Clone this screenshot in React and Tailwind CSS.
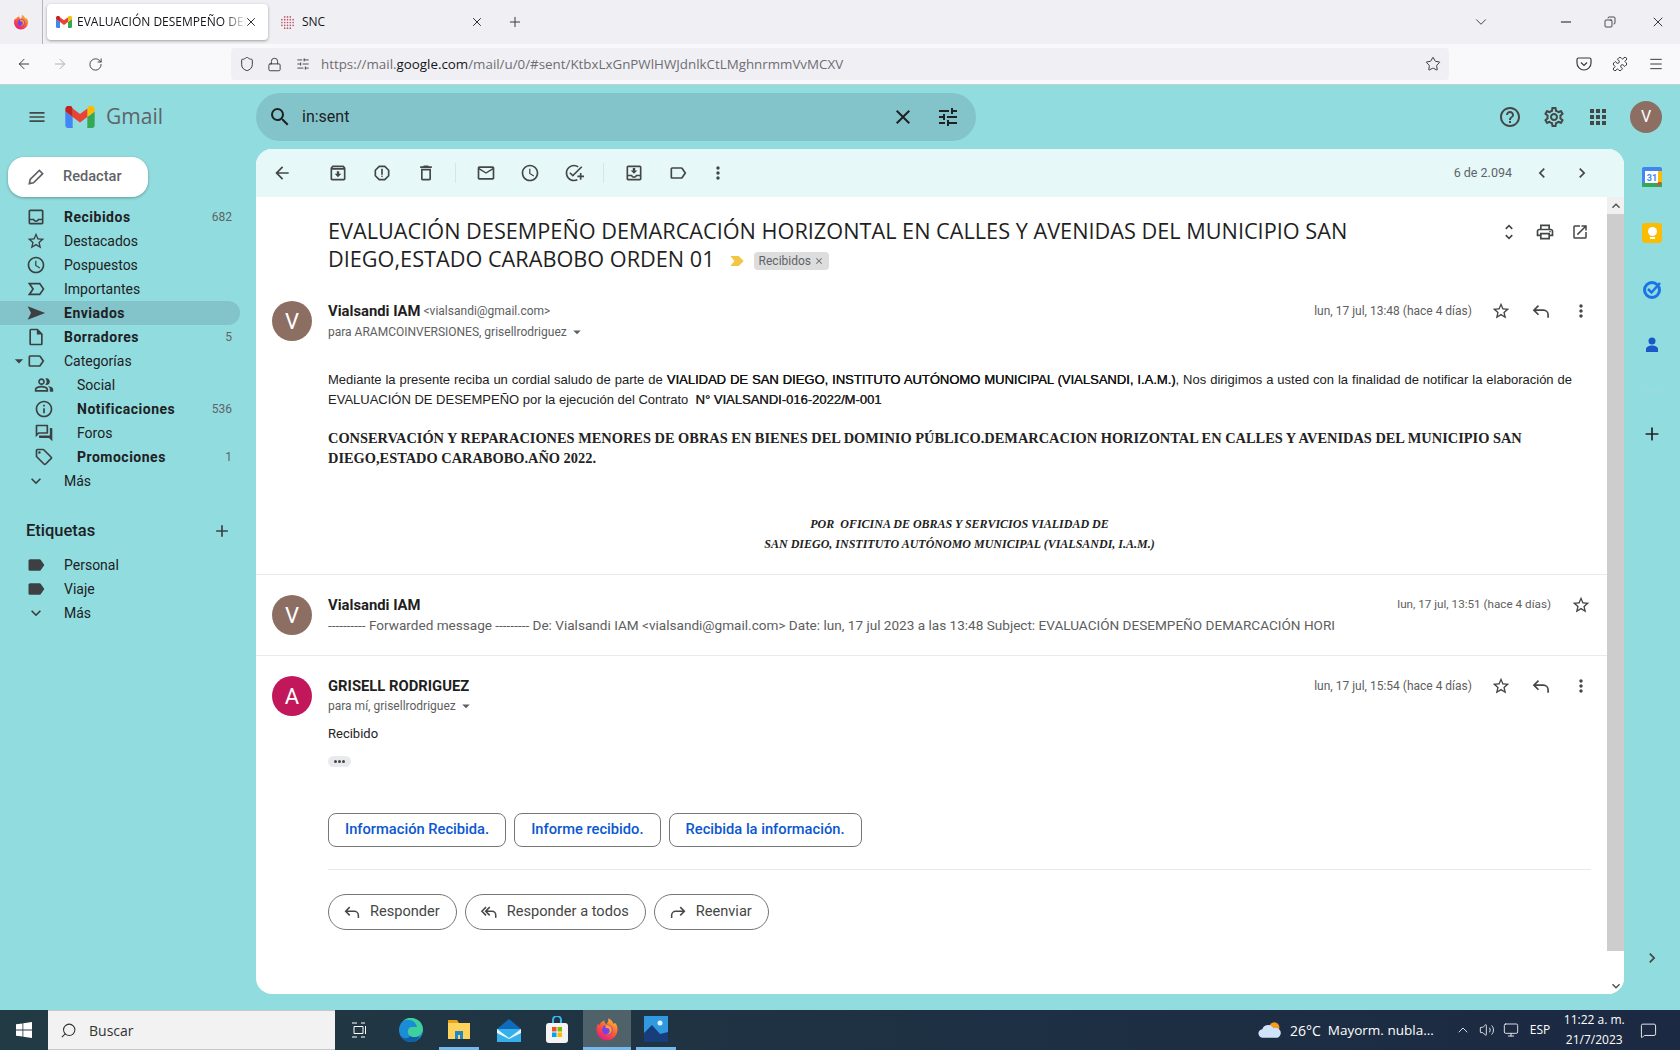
import {
  MdAdd, MdApps, MdArrowBack, MdChevronLeft, MdChevronRight, MdClose, MdExpandMore, MdHelpOutline, MdInfoOutline,
  MdKeyboardArrowDown, MdKeyboardArrowUp, MdLabel, MdMailOutline, MdMenu, MdMoreVert, MdOpenInNew, MdOutlineAddTask, MdOutlineArchive,
  MdOutlineDelete, MdOutlineForum, MdOutlineInbox, MdOutlineInsertDriveFile, MdOutlineLabel,
  MdOutlineLocalOffer, MdOutlineMoveToInbox, MdOutlinePeopleAlt, MdOutlinePrint, MdOutlineReport,
  MdOutlineSchedule, MdOutlineSettings, MdSearch, MdStarBorder, MdTune, MdUnfoldMore, MdArrowDropDown,
} from "react-icons/md";
import { ArrowLeft, ArrowRight, ChevronDown, ChevronUp, Copy, Lock, Menu, Minus, MessageSquare, Monitor, Plus, Puzzle, RotateCw, Search, Shield, SlidersHorizontal, Star, Volume2, X } from "lucide-react";

const GmailLogo = ({ className }) => (
  <svg viewBox="0 0 48 36" className={className}>
    <path fill="#4285F4" d="M4 36h8V18L0 9v23a4 4 0 0 0 4 4z" />
    <path fill="#34A853" d="M36 36h8a4 4 0 0 0 4-4V9l-12 9z" />
    <path fill="#FBBC04" d="M36 4v14l12-9V5c0-4.500-5.400-7.200-9.600-4.800z" />
    <path fill="#EA4335" d="M12 18V4l12 9 12-9v14l-12 9z" />
    <path fill="#C5221F" d="M0 5v4l12 9V4L9.600 .2C5.400-2.200 0 .5 0 5z" />
  </svg>
);

const FirefoxLogo = ({ className }) => (
  <svg viewBox="0 0 32 32" className={className}>
    <defs>
      <linearGradient id="ff" x1="0.8" y1="0" x2="0.2" y2="1">
        <stop offset="0" stopColor="#ffbd2e" />
        <stop offset="0.5" stopColor="#ff5a36" />
        <stop offset="1" stopColor="#e31587" />
      </linearGradient>
    </defs>
    <path fill="url(#ff)" d="M28 9c1.500 2.500 2 5 2 7.500C30 24.500 23.700 31 16 31S2 24.500 2 16.500c0-3 .9-5.700 2.400-8 .3 1.200.8 2 1.500 2.600C7 7.500 9.700 5.200 12.700 4.500c-.4 2.400.5 4 2.300 5 2-1.300 3-3.700 2.700-8 4.300 1.800 6 5 6.800 7.500.6-.6 1.800-1.200 3.500 0z" />
    <circle cx="16.500" cy="17" r="7" fill="#7542e5" />
    <path fill="#ff9a2e" d="M14 11c5-1 9 2 8.500 7-.5 4-4.500 6-8 5 3 0 5-2 5-4.500S17 14 14 15z" />
  </svg>
);

// iconos de Gmail que react-icons no trae en contorno
const ImportantIcon = ({ className }) => (
  <svg viewBox="0 0 24 24" className={`h-[1em] w-[1em] fill-none stroke-current stroke-2 ${className}`}><path d="M4 5.500h12.500L21 12l-4.500 6.500H4L8.500 12z" /></svg>
);
const SentIcon = ({ className }) => (
  <svg viewBox="0 0 24 24" className={`h-[1em] w-[1em] fill-current ${className}`}><path d="M2 4l21 8-21 8 4-8z" /></svg>
);
const ReplyIcon = ({ className = "" }) => (
  <svg viewBox="0 0 24 24" className={`h-[1em] w-[1em] fill-none stroke-current stroke-2 ${className}`}><path d="M9 5.500L3.500 11 9 16.500M3.500 11H15a5.500 5.500 0 0 1 5.500 5.500V20" /></svg>
);
const ReplyAllIcon = ({ className = "" }) => (
  <svg viewBox="0 0 24 24" className={`h-[1em] w-[1em] fill-none stroke-current stroke-2 ${className}`}><path d="M8 5.500L2.500 11 8 16.500M13 5.500L7.500 11l5.500 5.500M7.500 11H16a5 5 0 0 1 5 5v3.500" /></svg>
);

const SIDE = [
  { icon: MdOutlineInbox, label: "Recibidos", count: "682", bold: true },
  { icon: MdStarBorder, label: "Destacados" },
  { icon: MdOutlineSchedule, label: "Pospuestos" },
  { icon: ImportantIcon, label: "Importantes" },
  { icon: SentIcon, label: "Enviados", bold: true, active: true },
  { icon: MdOutlineInsertDriveFile, label: "Borradores", count: "5", bold: true },
  { icon: MdOutlineLabel, label: "Categorías", caret: true },
  { icon: MdOutlinePeopleAlt, label: "Social", sub: true },
  { icon: MdInfoOutline, label: "Notificaciones", count: "536", bold: true, sub: true },
  { icon: MdOutlineForum, label: "Foros", sub: true },
  { icon: MdOutlineLocalOffer, label: "Promociones", count: "1", bold: true, sub: true },
  { icon: MdExpandMore, label: "Más" },
];

const SideRow = ({ item }) => {
  const Icon = item.icon;
  return (
    <div className={`relative flex h-6 w-[240px] items-center rounded-r-full pr-2 text-[14px] text-[#202124] ${item.active ? "bg-[#83c4ca]" : ""}`}>
      {item.caret && <MdArrowDropDown className="absolute left-[9px] text-[20px] text-[#3c4043]" />}
      <span className={`flex shrink-0 justify-center ${item.sub ? "w-[77px] pl-[21px] pr-[11px]" : "w-[64px] pl-[24px] pr-[16px]"}`}>
        <Icon className="text-[20px] text-[#3c4043]" />
      </span>
      <span className={item.bold ? "font-bold tracking-[0.5px]" : ""}>{item.label}</span>
      {item.count && <span className="ml-auto text-[12px] text-[#5f6368]">{item.count}</span>}
    </div>
  );
};

const ToolIcon = ({ icon: Icon, className = "" }) => (
  <span className={`flex w-5 shrink-0 justify-center ${className}`}>
    <Icon className="text-[20px] text-[#444746]" />
  </span>
);

const MsgActions = () => (
  <div className="flex items-center text-[#444746]">
    <MdStarBorder className="ml-[19px] text-[20px]" />
    <ReplyIcon className="ml-[20px] text-[20px]" />
    <MdMoreVert className="ml-[20px] text-[20px]" />
  </div>
);

const Avatar = ({ letter, color, size = "h-10 w-10 text-[22px]" }) => (
  <div className={`flex shrink-0 items-center justify-center rounded-full text-white ${color} ${size}`}>{letter}</div>
);

const FootBtn = ({ children, icon }) => (
  <button className="flex h-9 items-center gap-[9px] rounded-full border border-[#747775] pl-[14px] pr-4 text-[14.600px] text-[#444746]">
    {icon}
    {children}
  </button>
);

export default function App() {
  return (
    <div className="flex h-[1050px] w-[1680px] flex-col overflow-hidden bg-[#91dcde] font-['Roboto',sans-serif]">
      {/* navegador */}
      <div className="flex h-11 shrink-0 items-center bg-[#f0f0f4] text-[13px] text-[#15141a] font-['Open_Sans',sans-serif]">
        <div className="flex h-full w-[43px] items-center justify-center border-r border-[#b5b5b8]">
          <FirefoxLogo className="h-4 w-4" />
        </div>
        <div className="ml-1 flex h-9 w-[221px] items-center rounded bg-white pl-[9px] shadow-[0_1px_3px_rgba(0,0,0,0.35)]">
          <GmailLogo className="h-[12px] w-4" />
          <span className="ml-[5px] w-[170px] overflow-hidden whitespace-nowrap text-[12px] [mask-image:linear-gradient(to_left,transparent,black_24px)]">EVALUACIÓN DESEMPEÑO DEMARCACIÓN</span>
          <X size={14} strokeWidth={1.5} className="-ml-[3px] shrink-0" />
        </div>
        <div className="flex w-[220px] items-center pl-[12px]">
          <svg viewBox="0 0 16 16" className="h-[15px] w-[15px]">
            <g fill="#c2566a">
              {[2, 5, 8, 11, 14].map((x) => [2, 5, 8, 11, 14].map((y) => (
                <circle key={`${x}-${y}`} cx={x} cy={y} r={(x - 8) ** 2 + (y - 8) ** 2 > 50 ? 0 : 0.9} />
              )))}
            </g>
          </svg>
          <span className="ml-[7px] text-[12px]">SNC</span>
          <X size={14} strokeWidth={1.5} className="ml-auto mr-[4px]" />
        </div>
        <Plus size={16} strokeWidth={1.5} className="ml-[19px] text-[#3b3b3f]" />
        <ChevronDown size={18} strokeWidth={1.25} className="ml-[949px] text-[#3b3b3f]" />
        <Minus size={16} strokeWidth={1.5} className="ml-[68px]" />
        <Copy size={12} strokeWidth={1.5} className="ml-[30px] -scale-x-100" />
        <X size={16} strokeWidth={1.25} className="ml-[34px]" />
      </div>
      <div className="flex h-10 shrink-0 items-center bg-[#f9f9fb] text-[#3b3b3f]">
        <ArrowLeft size={16} strokeWidth={1.5} className="ml-4" />
        <ArrowRight size={16} strokeWidth={1.5} className="ml-5 text-[#b0b0b4]" />
        <RotateCw size={15} strokeWidth={1.5} className="ml-5" />
        <div className="ml-[128px] flex h-8 w-[1218px] items-center rounded bg-[#f0f0f4]">
          <Shield size={16} strokeWidth={1.5} className="ml-2" />
          <Lock size={15} strokeWidth={1.5} className="ml-3" />
          <SlidersHorizontal size={14} strokeWidth={1.5} className="ml-[14px]" />
          <span className="ml-[11px] whitespace-nowrap pt-px text-[13.350px] text-[#6d6d72] font-['Open_Sans',sans-serif]">https://mail.<span className="text-[#15141a]">google.com</span>/mail/u/0/#sent/KtbxLxGnPWlHWJdnlkCtLMghnrmmVvMCXV</span>
          <Star size={16} strokeWidth={1.5} className="ml-auto mr-[8px]" />
        </div>
        <svg viewBox="0 0 16 16" className="ml-[127px] h-4 w-4 fill-none stroke-[#3b3b3f] stroke-[1.2]">
          <path d="M2.500 2h11a1.500 1.500 0 0 1 1.500 1.500V7a7 7 0 0 1-14 0V3.500A1.500 1.500 0 0 1 2.500 2z" />
          <path d="M5 6.500l3 3 3-3" />
        </svg>
        <Puzzle size={16} strokeWidth={1.5} className="ml-5" />
        <Menu size={16} strokeWidth={1.5} className="ml-5" />
      </div>
      <div className="h-px shrink-0 bg-[#c7ced0]" />

      {/* gmail */}
      <div className="relative flex min-h-0 flex-1">
        <div className="w-[256px] shrink-0">
          <div className="flex h-12 items-center pl-[27px] mt-2">
            <MdMenu className="text-[20px] text-[#444746]" />
            <GmailLogo className="ml-[18px] h-[22px] w-[30px]" />
            <span className="ml-[11px] text-[21px] text-[#5f6368] font-['Open_Sans',sans-serif]">Gmail</span>
          </div>
          <button className="ml-2 mt-4 flex h-10 w-[140px] items-center rounded-2xl bg-white pl-[18px] text-[14.600px] font-medium text-[#5f6368] shadow-[0_1px_3px_rgba(0,0,0,0.3)]">
            <svg viewBox="0 0 24 24" className="h-5 w-5 fill-none stroke-[#5f6368] stroke-2"><path d="M4 20l1-5L16 4l4 4L9 19z" /></svg>
            <span className="ml-[17px]">Redactar</span>
          </button>
          <div className="mt-2">
            {SIDE.map((item) => <SideRow key={item.label} item={item} />)}
          </div>
          <div className="mt-[26px] flex h-6 w-[240px] items-center justify-between pl-[26px] pr-[8px] text-[16.500px] font-medium text-[#202124]">
            Etiquetas
            <MdAdd className="text-[20px] text-[#3c4043]" />
          </div>
          <div className="mt-[10px]">
            <SideRow item={{ icon: MdLabel, label: "Personal" }} />
            <SideRow item={{ icon: MdLabel, label: "Viaje" }} />
            <SideRow item={{ icon: MdExpandMore, label: "Más" }} />
          </div>
        </div>

        <div className="flex min-w-0 flex-1 flex-col pb-4">
          {/* buscador */}
          <div className="-mr-[56px] mt-2 flex h-12 shrink-0 items-center pr-[18px]">
            <div className="flex h-12 w-[720px] shrink-0 items-center rounded-full bg-[#83c4ca] pl-[12px] pr-4 text-[16px] text-[#202124]">
              <MdSearch className="text-[24px]" />
              <span className="ml-[10px]">in:sent</span>
              <MdClose className="ml-auto text-[24px]" />
              <MdTune className="ml-[21px] text-[24px]" />
            </div>
            <MdHelpOutline className="ml-auto text-[24px] text-[#444746]" />
            <MdOutlineSettings className="ml-5 text-[24px] text-[#444746]" />
            <MdApps className="ml-5 text-[24px] text-[#444746]" />
            <Avatar letter="V" color="bg-[#8d6e63]" size="ml-[20px] h-8 w-8 text-[16px]" />
          </div>

          {/* tarjeta */}
          <div className="mt-2 flex min-h-0 w-[1368px] flex-1 flex-col overflow-hidden rounded-2xl bg-white">
            <div className="flex h-12 shrink-0 items-center bg-[#e6f8f8] pl-4 text-[#444746]">
              <ToolIcon icon={MdArrowBack} />
              <ToolIcon icon={MdOutlineArchive} className="ml-[36px]" />
              <ToolIcon icon={MdOutlineReport} className="ml-6" />
              <ToolIcon icon={MdOutlineDelete} className="ml-6" />
              <div className="ml-[19px] mr-5 h-5 w-px bg-[#d5e6e6]" />
              <ToolIcon icon={MdMailOutline} />
              <ToolIcon icon={MdOutlineSchedule} className="ml-6" />
              <ToolIcon icon={MdOutlineAddTask} className="ml-6" />
              <div className="ml-[19px] mr-5 h-5 w-px bg-[#d5e6e6]" />
              <ToolIcon icon={MdOutlineMoveToInbox} />
              <ToolIcon icon={MdOutlineLabel} className="ml-6" />
              <ToolIcon icon={MdMoreVert} className="ml-5" />
              <span className="ml-auto text-[12.500px] text-[#5f6368]">6 de 2.094</span>
              <ToolIcon icon={MdChevronLeft} className="ml-5" />
              <ToolIcon icon={MdChevronRight} className="ml-5 mr-[32px]" />
            </div>
            <div className="flex min-h-0 flex-1">
              <div className="min-w-0 flex-1">
                {/* asunto */}
                <div className="flex pl-[72px] pr-[18px] pt-5">
                  <div className="w-[1060px] text-[21.700px] leading-7 text-[#1f1f1f] font-['Open_Sans',sans-serif]">
                    EVALUACIÓN DESEMPEÑO DEMARCACIÓN HORIZONTAL EN CALLES Y AVENIDAS DEL MUNICIPIO SAN DIEGO,ESTADO CARABOBO ORDEN 01
                    <svg viewBox="0 0 16 12" className="ml-[15px] inline h-[10px] w-[14px] fill-[#f4c542]"><path d="M0 0h10l6 6-6 6H0l5-6z" /></svg>
                    <span className="ml-[10px] inline-flex h-[18px] items-center rounded bg-[#dddddd] px-[5px] align-[2px] font-['Roboto',sans-serif] text-[12px] leading-none text-[#5f6368]">Recibidos <MdClose className="ml-[3px] text-[10px]" /></span>
                  </div>
                  <div className="ml-auto flex h-5 items-center pt-[9px] text-[#444746]">
                    <MdUnfoldMore className="text-[20px]" />
                    <MdOutlinePrint className="ml-4 text-[20px]" />
                    <MdOpenInNew className="ml-4 text-[18px]" />
                  </div>
                </div>

                {/* primer mensaje */}
                <div className="border-b border-[#e8eaed] pb-[20px]">
                  <div className="mt-[28px] flex pl-4 pr-[16px]">
                    <Avatar letter="V" color="bg-[#8d6e63]" />
                    <div className="ml-4 flex-1">
                      <div className="flex h-5 items-center">
                        <span className="text-[14.800px] font-bold text-[#1f1f1f]">Vialsandi IAM</span>
                        <span className="ml-[3px] text-[12px] text-[#5e5e5e]">&lt;vialsandi@gmail.com&gt;</span>
                        <span className="ml-auto text-[12px] text-[#5e5e5e]">lun, 17 jul, 13:48 (hace 4 días)</span>
                        <MsgActions />
                      </div>
                      <div className="mt-[2px] flex items-center text-[12px] text-[#5e5e5e]">para ARAMCOINVERSIONES, grisellrodriguez<MdArrowDropDown className="ml-px text-[18px]" /></div>
                    </div>
                  </div>
                  <div className="mt-[29px] pl-[72px] pr-[16px]">
                    <p className="mr-[19px] text-justify text-[13px] leading-[19.500px] text-[#222] font-['Liberation_Sans',sans-serif]">
                      Mediante la presente reciba un cordial saludo de parte de <span className="text-[#111] [text-shadow:0.3px_0_0_#111]">VIALIDAD DE SAN DIEGO, INSTITUTO AUTÓNOMO MUNICIPAL (VIALSANDI, I.A.M.)</span>, Nos dirigimos a usted con la finalidad de notificar la elaboración de EVALUACIÓN DE DESEMPEÑO por la ejecución del Contrato&nbsp; <span className="[text-shadow:0.3px_0_0_#111]">N° VIALSANDI-016-2022/M-001</span>
                    </p>
                    <p className="mt-[19px] text-[14.400px] font-bold leading-5 text-[#222] font-['Liberation_Serif',serif]">
                      CONSERVACIÓN Y REPARACIONES MENORES DE OBRAS EN BIENES DEL DOMINIO PÚBLICO.DEMARCACION HORIZONTAL EN CALLES Y AVENIDAS DEL MUNICIPIO SAN DIEGO,ESTADO CARABOBO.AÑO 2022.
                    </p>
                    <p className="mt-[47px] text-center text-[12px] font-bold italic leading-[19.500px] text-[#222] font-['Liberation_Serif',serif]">
                      POR&nbsp; OFICINA DE OBRAS Y SERVICIOS VIALIDAD DE<br />SAN DIEGO, INSTITUTO AUTÓNOMO MUNICIPAL (VIALSANDI, I.A.M.)
                    </p>
                  </div>
                </div>

                {/* segundo mensaje */}
                <div className="flex h-[81px] items-center border-b border-[#e8eaed] pl-4 pr-[16px]">
                  <Avatar letter="V" color="bg-[#8d6e63]" />
                  <div className="ml-4 flex-1">
                    <div className="flex h-5 items-center">
                      <span className="text-[14.800px] font-bold text-[#1f1f1f]">Vialsandi IAM</span>
                      <span className="ml-auto text-[11.700px] text-[#5e5e5e]">lun, 17 jul, 13:51 (hace 4 días)</span>
                      <MdStarBorder className="ml-[20px] text-[20px] text-[#444746]" />
                    </div>
                    <div className="text-[13.580px] text-[#5e5e5e]">---------- Forwarded message --------- De: Vialsandi IAM &lt;vialsandi@gmail.com&gt; Date: lun, 17 jul 2023 a las 13:48 Subject: EVALUACIÓN DESEMPEÑO DEMARCACIÓN HORI</div>
                  </div>
                </div>

                {/* tercer mensaje */}
                <div className="mt-5 flex pl-4 pr-[16px]">
                  <Avatar letter="A" color="bg-[#c2185b]" />
                  <div className="ml-4 flex-1">
                    <div className="flex h-5 items-center">
                      <span className="text-[14.800px] font-bold text-[#1f1f1f]">GRISELL RODRIGUEZ</span>
                      <span className="ml-auto text-[12px] text-[#5e5e5e]">lun, 17 jul, 15:54 (hace 4 días)</span>
                      <MsgActions />
                    </div>
                    <div className="mt-px flex items-center text-[12px] text-[#5e5e5e]">para mí, grisellrodriguez<MdArrowDropDown className="ml-px text-[18px]" /></div>
                    <div className="mt-[9px] text-[13px] text-[#222]">Recibido</div>
                    <div className="mt-[12px] flex h-[11px] w-[23px] items-center justify-center gap-px rounded-full bg-[#e8eaed]">
                      <i className="h-[3px] w-[3px] rounded-full bg-[#444746]" />
                      <i className="h-[3px] w-[3px] rounded-full bg-[#444746]" />
                      <i className="h-[3px] w-[3px] rounded-full bg-[#444746]" />
                    </div>
                    <div className="mt-[46px] flex gap-2 border-b border-[#e8eaed] pb-[22px]">
                      {["Información Recibida.", "Informe recibido.", "Recibida la información."].map((t) => (
                        <button key={t} className="flex h-[34px] items-center rounded-lg border border-[#747775] px-4 text-[14.700px] font-medium text-[#0b57d0]">{t}</button>
                      ))}
                    </div>
                    <div className="mt-6 flex gap-2">
                      <FootBtn icon={<ReplyIcon className="text-[18px]" />}>Responder</FootBtn>
                      <FootBtn icon={<ReplyAllIcon className="text-[18px]" />}>Responder a todos</FootBtn>
                      <FootBtn icon={<ReplyIcon className="-scale-x-100 text-[18px]" />}>Reenviar</FootBtn>
                    </div>
                  </div>
                </div>
              </div>

              {/* scrollbar */}
              <div className="flex w-[17px] shrink-0 flex-col bg-white">
                <div className="flex h-[17px] items-center justify-center bg-[#f0f0f0]"><MdKeyboardArrowUp className="text-[16px] text-[#505050]" /></div>
                <div className="h-[737px] bg-[#cdcdcd]" />
                <div className="mt-auto flex h-[17px] items-center justify-center"><MdKeyboardArrowDown className="text-[16px] text-[#505050]" /></div>
              </div>
            </div>
          </div>
        </div>

        {/* panel derecho */}
        <div className="flex w-[56px] shrink-0 flex-col items-center pt-[82px]">
          <svg viewBox="0 0 20 20" className="h-5 w-5">
            <rect width="20" height="20" rx="2" fill="#4285f4" />
            <rect x="3" y="4" width="14" height="12" fill="#fff" />
            <rect y="16" width="20" height="4" fill="#34a853" />
            <rect x="16" y="4" width="4" height="12" fill="#fbbc04" />
            <path d="M15 20l5-5h-4z" fill="#ea4335" />
            <text x="10" y="14" fontSize="9" fontWeight="700" textAnchor="middle" fill="#4285f4">31</text>
          </svg>
          <div className="mt-9 flex h-5 w-5 flex-col items-center justify-center rounded-[3px] bg-[#fbbc04]">
            <i className="h-[9px] w-[9px] rounded-full bg-white" />
            <i className="mt-px h-[2px] w-[5px] bg-white" />
          </div>
          <svg viewBox="0 0 20 20" className="mt-9 h-5 w-5">
            <circle cx="10" cy="11" r="7.500" fill="none" stroke="#1a73e8" strokeWidth="3" />
            <path d="M6 10l3.500 3.500L18 4" fill="none" stroke="#1a73e8" strokeWidth="2.500" />
          </svg>
          <svg viewBox="0 0 20 20" className="mt-9 h-5 w-5" fill="#1a57c8">
            <circle cx="10" cy="6" r="3.500" />
            <path d="M4 17v-3c0-2 3-3.500 6-3.500s6 1.500 6 3.500v3z" />
          </svg>
          <div className="mt-[35px] h-px w-5 bg-[#a8d6d8]" />
          <Plus size={20} className="mt-[33px] text-[#202124]" />
          <MdChevronRight className="mt-auto mb-[42px] text-[20px] text-[#444746]" />
        </div>
      </div>

      {/* barra de tareas */}
      <div className="flex h-10 shrink-0 items-center bg-gradient-to-r from-[#223a44] to-[#1b2942] text-white">
        <div className="flex w-12 justify-center">
          <svg viewBox="0 0 16 16" className="h-4 w-4 fill-white"><path d="M0 2.300l6.500-.9v6.200H0zM7.300 1.300L16 0v7.600H7.300zM0 8.400h6.500v6.200L0 13.700zM7.300 8.400H16V16l-8.700-1.200z" /></svg>
        </div>
        <div className="flex h-10 w-[287px] items-center border-y border-[#c8c8c8] bg-[#f2f2f2] pl-[12px] text-[14px] text-[#333] font-['Open_Sans',sans-serif]">
          <Search size={17} strokeWidth={1.5} className="-scale-x-100" />
          <span className="ml-[12px]">Buscar</span>
        </div>
        <div className="flex w-12 justify-center">
          <svg viewBox="0 0 16 16" className="h-4 w-4 fill-none stroke-white"><path d="M1 1h5M1 15h5M10 1h4M10 15h4M3 4.500h9v7H3zM14.500 4v8" /></svg>
        </div>
        <div className="ml-1 flex h-full w-12 items-center justify-center">
          <svg viewBox="0 0 24 24" className="h-6 w-6"><circle cx="12" cy="12" r="12" fill="#1b8dd6" /><path d="M24 12A12 12 0 0 0 4 3c6-3 13 0 14 6h-5c-4 0-6 6-2 9 3 2 8 2 11-2 1-1 2-3 2-4z" fill="#3ecf9a" /><path d="M12 24a12 12 0 0 1-10-6c3 3 7 3 9 0 3 2 8 1 10 0-2 4-5 6-9 6z" fill="#0f5fa8" /></svg>
        </div>
        <div className="ml-1 mr-[6px] flex h-full w-10 items-center justify-center border-b-[3px] border-[#76b9ed]">
          <svg viewBox="0 0 24 24" className="h-6 w-6"><path d="M1 3h9l2 3H1z" fill="#e8a31c" /><rect x="1" y="6" width="22" height="16" fill="#fdd35c" /><rect x="8" y="14" width="8" height="8" fill="#1e88c9" /><rect x="11" y="18" width="2" height="4" fill="#fdd35c" /></svg>
        </div>
        <div className="flex h-full w-12 items-center justify-center">
          <svg viewBox="0 0 24 24" className="h-7 w-6"><path d="M12 1l12 10v13H0V11z" fill="#0f6cbd" /><path d="M0 11h24v13H0z" fill="#36b0ea" /><path d="M0 11l12 9 12-9v4l-12 6L0 15z" fill="#e8f6fd" /></svg>
        </div>
        <div className="flex h-full w-12 items-center justify-center">
          <svg viewBox="0 0 24 26" className="h-7 w-6"><path d="M8 7V3a4 4 0 0 1 8 0v4" fill="none" stroke="#38b6f0" strokeWidth="2" /><rect x="1" y="6" width="22" height="20" rx="3" fill="#f4f4f4" /><rect x="7" y="10" width="4.500" height="4.500" fill="#f25022" /><rect x="12.500" y="10" width="4.500" height="4.500" fill="#7fba00" /><rect x="7" y="15.500" width="4.500" height="4.500" fill="#00a4ef" /><rect x="12.500" y="15.500" width="4.500" height="4.500" fill="#ffb900" /></svg>
        </div>
        <div className="ml-[2px] flex h-full w-12 items-center justify-center border-b-[3px] border-[#76b9ed] bg-[#4f6269]">
          <FirefoxLogo className="h-6 w-6" />
        </div>
        <div className="ml-[5px] mr-1 flex h-full w-10 items-center justify-center border-b-[3px] border-[#76b9ed]">
          <svg viewBox="0 0 24 26" className="h-7 w-6"><rect width="24" height="26" fill="#2f9ae0" /><path d="M0 26V17L8 9l8 9 8-2v10z" fill="#173e7a" /><circle cx="16" cy="7" r="2.500" fill="#e3f4ff" /></svg>
        </div>
        <svg viewBox="0 0 28 20" className="ml-[578px] h-5 w-6"><circle cx="19" cy="7" r="6" fill="#f49b22" /><path d="M6 19a5 5 0 0 1-1-10 7 7 0 0 1 13-1 5 5 0 0 1 5 11z" fill="#cfe3fa" /></svg>
        <span className="ml-2 text-[14px] font-['Open_Sans',sans-serif]">26°C</span>
        <span className="ml-[7px] text-[13.500px] font-['Open_Sans',sans-serif]">Mayorm. nubla...</span>
        <ChevronUp size={16} strokeWidth={1.25} className="ml-[21px]" />
        <Volume2 size={16} strokeWidth={1.25} className="ml-2" />
        <Monitor size={16} strokeWidth={1.25} className="ml-2" />
        <span className="ml-[11px] text-[12px] font-['Open_Sans',sans-serif]">ESP</span>
        <div className="ml-2 w-[72px] whitespace-nowrap text-center text-[12px] leading-[20px] font-['Open_Sans',sans-serif]">11:22 a. m.<br />21/7/2023</div>
        <MessageSquare size={17} strokeWidth={1.25} className="ml-[10px]" />
      </div>
    </div>
  );
}
